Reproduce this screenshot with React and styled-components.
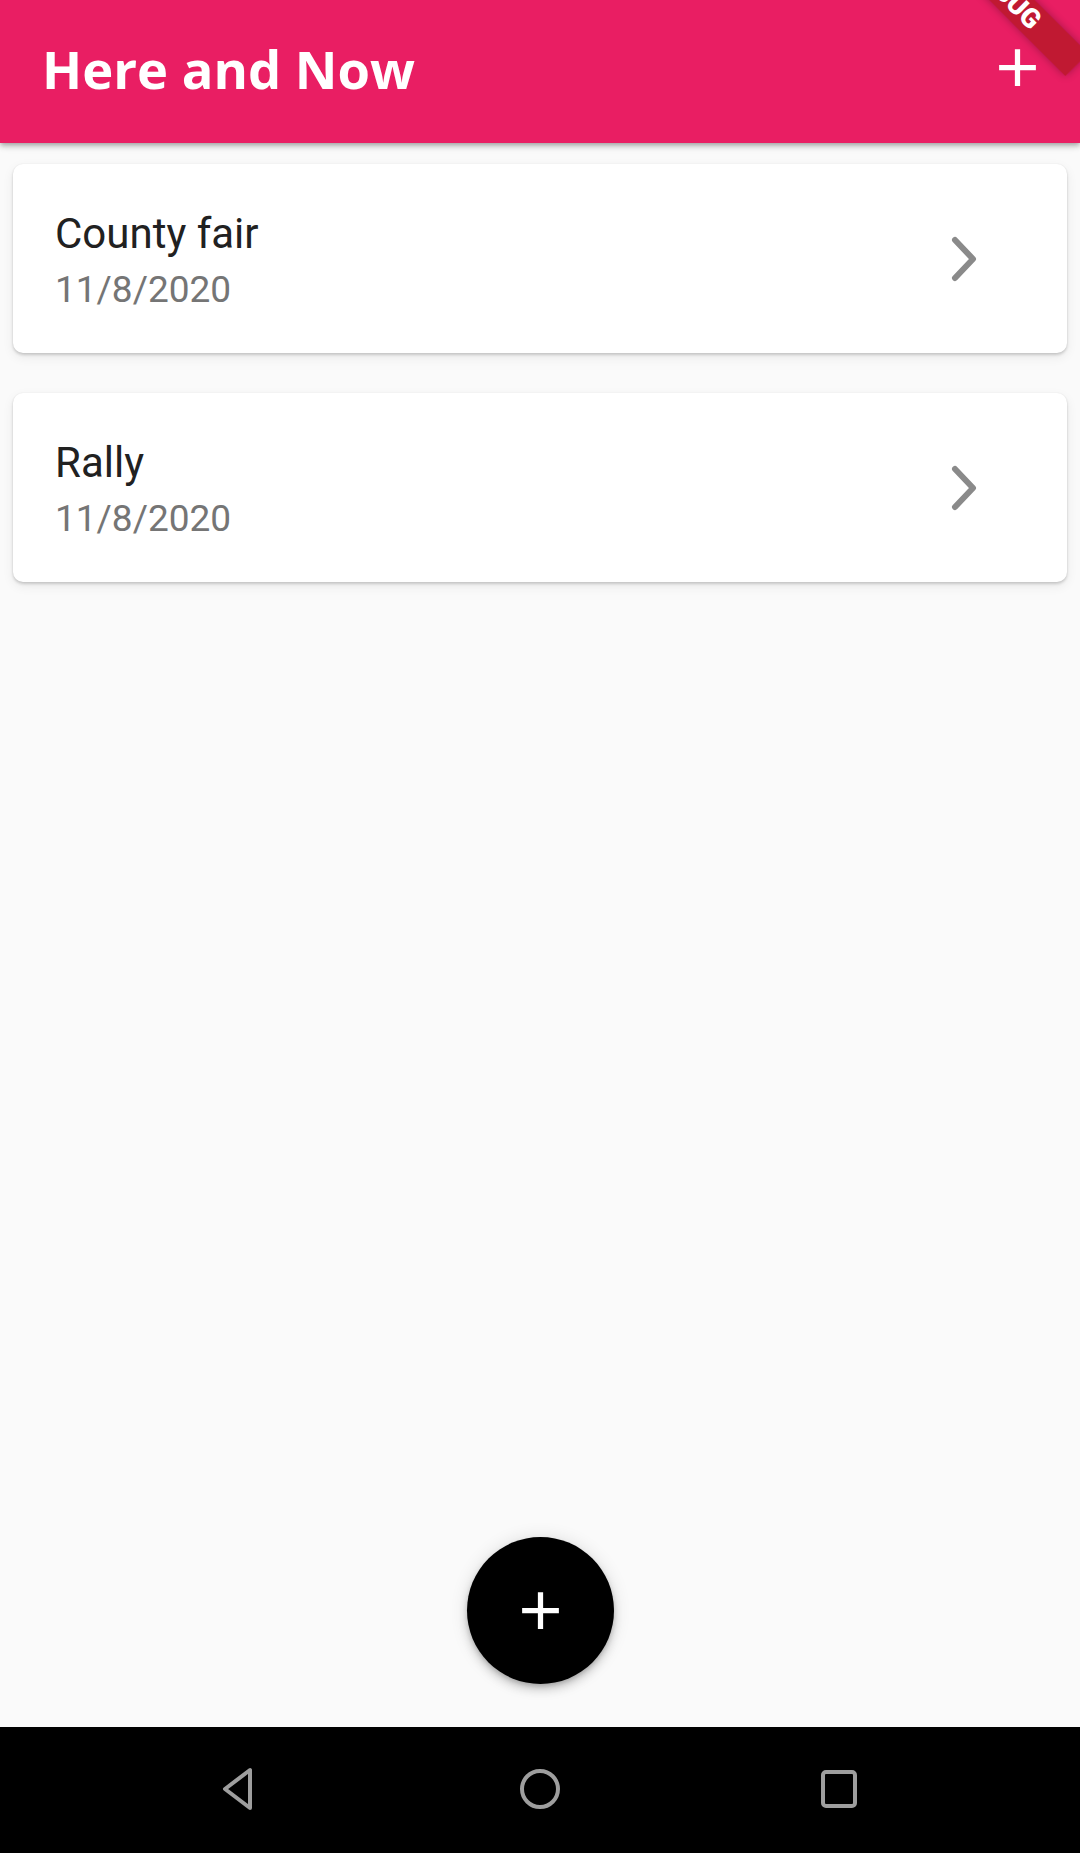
import React from "react";
import styled, { createGlobalStyle } from "styled-components";

const GlobalStyle = createGlobalStyle`
  html, body {
    margin: 0;
    padding: 0;
    background: #fafafa;
    overflow: hidden;
  }
  #root {
    width: 1080px;
    height: 1853px;
  }
`;

const Screen = styled.div`
  position: relative;
  width: 1080px;
  height: 1853px;
  display: flex;
  flex-direction: column;
  background: #fafafa;
  overflow: hidden;
  font-family: Roboto, "Noto Sans", sans-serif;
`;

const AppBar = styled.header`
  position: relative;
  z-index: 2;
  flex: 0 0 143px;
  height: 143px;
  display: flex;
  align-items: center;
  justify-content: space-between;
  padding-left: 42px;
  background: #e91e63;
  box-shadow: 0 2px 4px -1px rgba(0, 0, 0, 0.2), 0 4px 5px 0 rgba(0, 0, 0, 0.14),
    0 1px 10px 0 rgba(0, 0, 0, 0.12);
`;

const Title = styled.h1`
  margin: 0;
  font-family: "Open Sans", "Noto Sans", sans-serif;
  font-weight: 700;
  font-size: 52.5px;
  line-height: 1;
  color: #ffffff;
  margin-top: -4px;
`;

const IconButton = styled.button`
  width: 126px;
  height: 126px;
  border: 0;
  padding: 0;
  background: transparent;
  display: flex;
  align-items: center;
  justify-content: center;
  color: #ffffff;
  margin-top: -8px;
`;

const DebugBanner = styled.div`
  position: absolute;
  left: 906px;
  top: -22px;
  width: 200px;
  height: 32px;
  transform: rotate(45deg);
  background: rgba(176, 24, 32, 0.72);
  box-shadow: 0 0 8px rgba(0, 0, 0, 0.3);
  display: flex;
  align-items: center;
  justify-content: center;
  color: #ffffff;
  font-family: Roboto, "Noto Sans", sans-serif;
  font-weight: 900;
  font-size: 27px;
  line-height: 1;
  z-index: 5;
`;

const Body = styled.main`
  flex: 1 1 auto;
  display: flex;
  flex-direction: column;
  padding: 21px 13px 43px;
`;

const List = styled.div`
  display: flex;
  flex-direction: column;
  gap: 40px;
`;

const Card = styled.div`
  height: 189px;
  box-sizing: border-box;
  display: flex;
  align-items: center;
  justify-content: space-between;
  padding: 0 85px 0 42px;
  background: #ffffff;
  border-radius: 10px;
  box-shadow: 0 2px 3px rgba(0, 0, 0, 0.16), 0 4px 12px rgba(0, 0, 0, 0.07),
    0 0 2px rgba(0, 0, 0, 0.06);
`;

const TextBlock = styled.div`
  display: flex;
  flex-direction: column;
  gap: 9px;
  margin-top: 3px;
`;

const ItemTitle = styled.div`
  font-family: Roboto, "Noto Sans", sans-serif;
  font-size: 42px;
  line-height: 50px;
  color: #212121;
`;

const ItemDate = styled.div`
  font-family: Roboto, "Noto Sans", sans-serif;
  font-size: 37px;
  line-height: 44px;
  color: #757575;
`;

const Fab = styled.button`
  margin-top: auto;
  align-self: center;
  width: 147px;
  height: 147px;
  border-radius: 50%;
  border: 0;
  padding: 0;
  background: #000000;
  color: #ffffff;
  display: flex;
  align-items: center;
  justify-content: center;
  box-shadow: 0 3px 5px -1px rgba(0, 0, 0, 0.2), 0 6px 10px 0 rgba(0, 0, 0, 0.14),
    0 1px 18px 0 rgba(0, 0, 0, 0.12);
`;

const NavBar = styled.nav`
  flex: 0 0 126px;
  height: 126px;
  background: #000000;
  display: flex;
  justify-content: center;
  align-items: center;
`;

const NavSlot = styled.div`
  width: 299px;
  display: flex;
  justify-content: center;
  align-items: center;
  color: #9e9e9e;
  margin-top: -2px;
`;

const AddIcon = ({ size = 63 }) => (
  <svg width={size} height={size} viewBox="0 0 24 24" fill="currentColor">
    <path d="M19 13h-6v6h-2v-6H5v-2h6V5h2v6h6v2z" />
  </svg>
);

const Chevron = () => (
  <svg width="34" height="56" viewBox="0 0 34 56" fill="none">
    <polyline
      points="7,9 25,28 7,47"
      stroke="#8a8a8a"
      strokeWidth="6"
      strokeLinecap="round"
      strokeLinejoin="round"
    />
  </svg>
);

const BackIcon = () => (
  <svg width="40" height="46" viewBox="0 0 40 46" fill="none">
    <path
      d="M29 4 L29 42 L4 23 Z"
      stroke="currentColor"
      strokeWidth="4"
      strokeLinejoin="round"
    />
  </svg>
);

const HomeIcon = () => (
  <svg width="46" height="46" viewBox="0 0 46 46" fill="none">
    <circle cx="23" cy="23" r="18" stroke="currentColor" strokeWidth="4" />
  </svg>
);

const RecentIcon = () => (
  <svg width="40" height="42" viewBox="0 0 40 42" fill="none">
    <rect x="4" y="4" width="32" height="34" rx="3" stroke="currentColor" strokeWidth="4" />
  </svg>
);

const items = [
  { title: "County fair", date: "11/8/2020" },
  { title: "Rally", date: "11/8/2020" },
];

export default function App() {
  return (
    <>
      <GlobalStyle />
      <Screen>
        <AppBar>
          <Title>Here and Now</Title>
          <IconButton aria-label="Add">
            <AddIcon />
          </IconButton>
        </AppBar>
        <DebugBanner>DEBUG</DebugBanner>
        <Body>
          <List>
            {items.map((item) => (
              <Card key={item.title}>
                <TextBlock>
                  <ItemTitle>{item.title}</ItemTitle>
                  <ItemDate>{item.date}</ItemDate>
                </TextBlock>
                <Chevron />
              </Card>
            ))}
          </List>
          <Fab aria-label="Add">
            <AddIcon />
          </Fab>
        </Body>
        <NavBar>
          <NavSlot>
            <BackIcon />
          </NavSlot>
          <NavSlot>
            <HomeIcon />
          </NavSlot>
          <NavSlot>
            <RecentIcon />
          </NavSlot>
        </NavBar>
      </Screen>
    </>
  );
}
